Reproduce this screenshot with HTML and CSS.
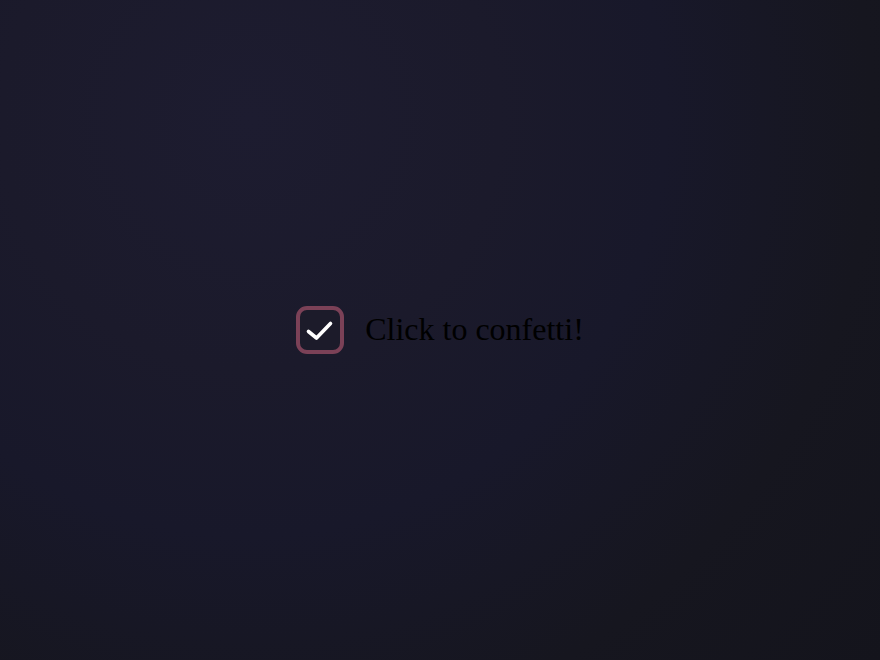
FILE: index.html
```html
<!DOCTYPE html>
<html>
<head>
<meta charset="utf-8">
<link rel="stylesheet" href="styles.css">
</head>
<body>
<main class="stage">
  <label class="option">
    <span class="box">
      <svg class="tick" width="48" height="48" viewBox="0 0 48 48">
        <path d="M12.5 25.5 L20.5 32 L34.5 17.5" fill="none" stroke="#ffffff" stroke-width="3.6" stroke-linecap="round" stroke-linejoin="round"/>
      </svg>
    </span>
    <span class="label">Click to confetti!</span>
  </label>
</main>
</body>
</html>
```
FILE: styles.css
```css
html, body {
  margin: 0;
  padding: 0;
  height: 100%;
}
body {
  background: radial-gradient(circle at 250px 120px, #1d1c30 0%, #1b1a2b 30%, #18182a 50%, #16161f 75%, #14141c 100%);
  font-family: "Liberation Serif", "Times New Roman", serif;
}
.stage {
  height: 100%;
  display: flex;
  align-items: center;
  justify-content: center;
}
.option {
  display: flex;
  align-items: center;
  gap: 21px;
  cursor: pointer;
}
.box {
  box-sizing: border-box;
  width: 48px;
  height: 48px;
  border: 4px solid #7b4157;
  border-radius: 11px;
  background: #1c1b2a;
  position: relative;
  display: block;
}
.tick {
  position: absolute;
  left: -4px;
  top: -4px;
}
.label {
  font-size: 32px;
  color: #000;
  line-height: 1;
  position: relative;
  top: -1px;
}
```
